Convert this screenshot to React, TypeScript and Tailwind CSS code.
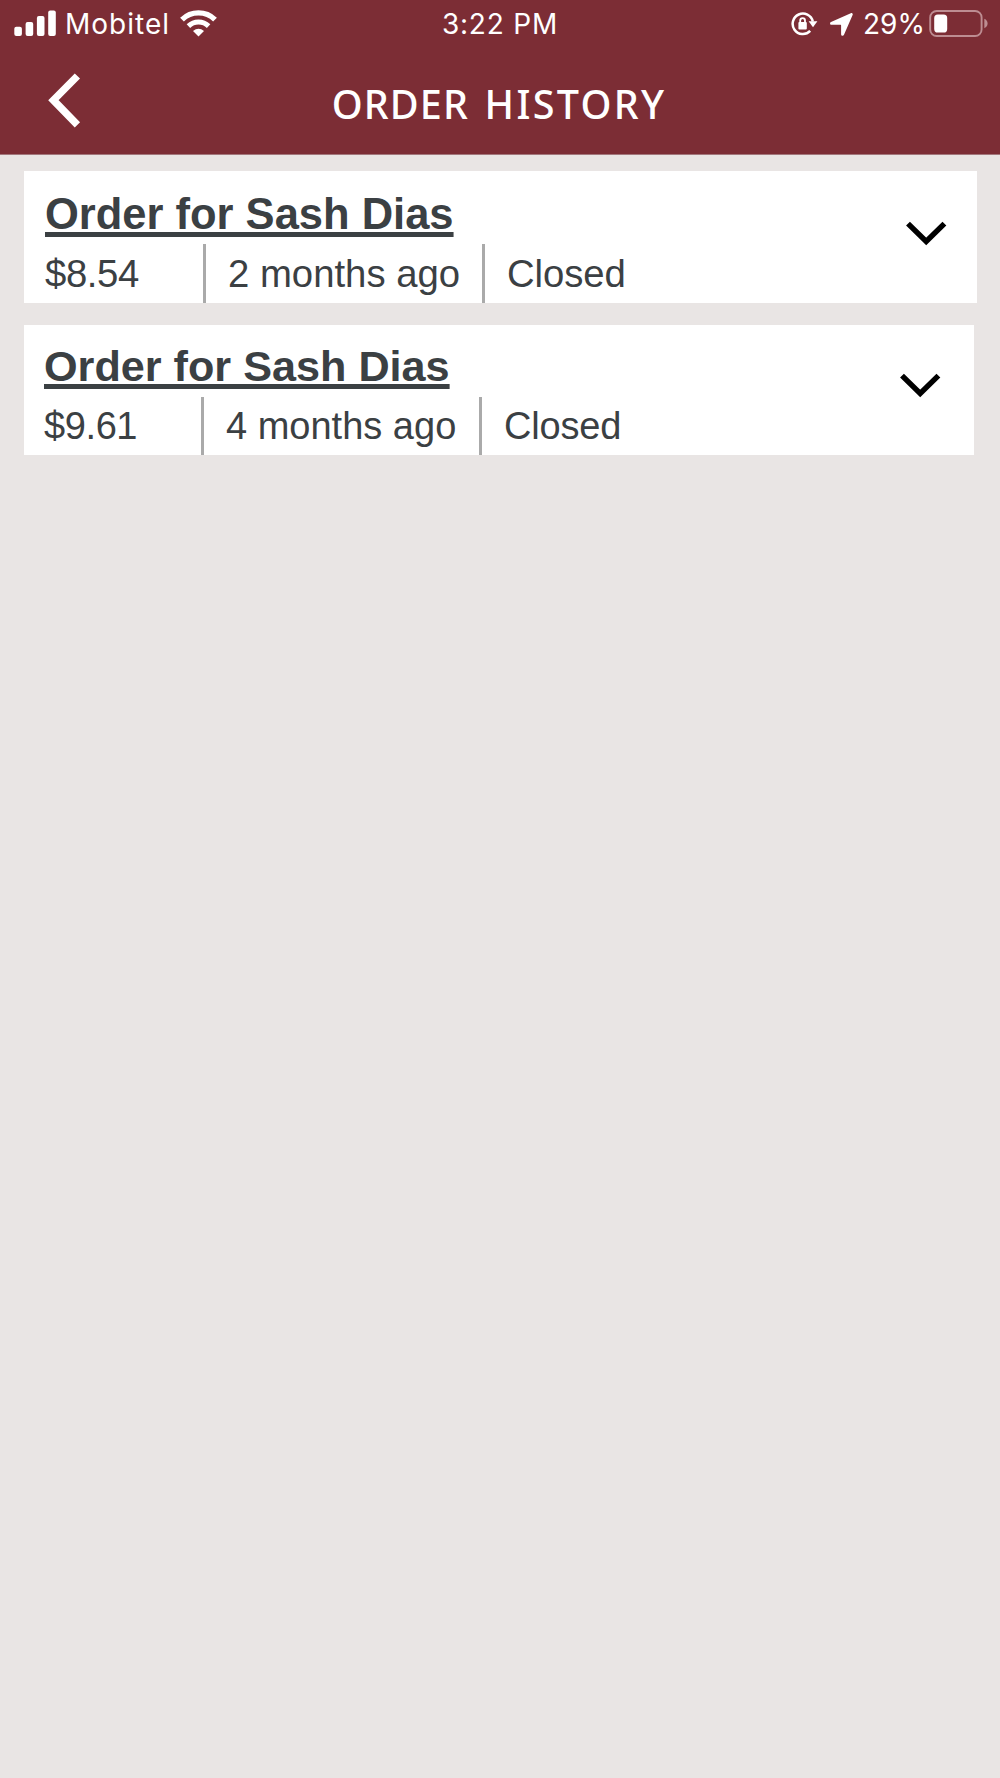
type Order = {
  id: number;
  name: string;
  total: string;
  placed: string;
  status: string;
};

const FIRST: Order = {
  id: 1,
  name: "Order for Sash Dias",
  total: "$8.54",
  placed: "2 months ago",
  status: "Closed",
};

const SECOND: Order = {
  id: 2,
  name: "Order for Sash Dias",
  total: "$9.61",
  placed: "4 months ago",
  status: "Closed",
};

function SignalIcon() {
  return (
    <svg width="42" height="26" viewBox="0 0 42 26" fill="white" aria-hidden>
      <rect x="0.3" y="16.8" width="7.6" height="9.2" rx="2" />
      <rect x="11.6" y="12" width="7.6" height="14" rx="2" />
      <rect x="22.9" y="6" width="7.6" height="20" rx="2" />
      <rect x="34.2" y="0.4" width="7.6" height="25.6" rx="2" />
    </svg>
  );
}

function WifiIcon() {
  return (
    <svg width="37" height="27" viewBox="0 0 37 27" fill="none" aria-hidden>
      <path d="M2 9.6a23.6 23.6 0 0 1 33 0" stroke="white" strokeWidth="5.4" />
      <path d="M8.4 16.1a14.6 14.6 0 0 1 20.2 0" stroke="white" strokeWidth="5" />
      <path d="M18.5 26.6 13 21q5.5-4.6 11 0z" fill="white" />
    </svg>
  );
}

function RotationLockIcon() {
  return (
    <svg width="27" height="24" viewBox="0 0 27 24" fill="none" aria-hidden>
      <path d="M19.2 18.9a10.2 10.2 0 1 1 2.6-9.4" stroke="white" strokeWidth="2.5" />
      <path d="M17.6 9.2h8.8l-4.4 6z" fill="white" />
      <rect x="7.4" y="10" width="8.4" height="7.4" rx="1" fill="white" />
      <path d="M9.2 11V8.6a2.4 2.4 0 0 1 4.8 0V11" stroke="white" strokeWidth="1.8" />
    </svg>
  );
}

function LocationIcon() {
  return (
    <svg width="23" height="23" viewBox="0 0 23 23" fill="white" aria-hidden>
      <path d="M20.8.2 1 9c-1.5.7-1.2 2.8.5 2.8h8.8c.6 0 .8.2.8.8v8.6c0 1.8 2.2 2.2 2.9.6L22.6 2.1C23.2.8 22-.4 20.8.2z" />
    </svg>
  );
}

function BatteryIcon() {
  return (
    <svg width="60" height="27" viewBox="0 0 60 27" fill="none" aria-hidden>
      <rect x="1.2" y="1" width="51.4" height="25" rx="6.5" stroke="#bd8d92" strokeWidth="1.9" />
      <rect x="5.2" y="4.5" width="13" height="18" rx="3.6" fill="white" />
      <path d="M55.3 8.8c4.4 1.7 4.4 7.7 0 9.4z" fill="#bd8d92" />
    </svg>
  );
}

function ChevronDown() {
  return (
    <svg width="42" height="26" viewBox="0 0 42 26" fill="none" aria-hidden>
      <path d="M3 2.6 21.2 20.4 39.4 2.6" stroke="black" strokeWidth="5.5" />
    </svg>
  );
}

function StatusBar() {
  return (
    <div className="grid h-[46px] grid-cols-[1fr_auto_1fr] text-[28px] leading-[46px] text-white">
      <div className="flex pl-[14px]">
        <span className="pt-[10px]">
          <SignalIcon />
        </span>
        <span className="ml-[9px] w-[115px] pt-px tracking-[1px]">Mobitel</span>
        <span className="pt-[10px]">
          <WifiIcon />
        </span>
      </div>
      <span className="pt-px tracking-[0.8px]">3:22 PM</span>
      <div className="flex justify-end pr-[11px]">
        <span className="pt-3">
          <RotationLockIcon />
        </span>
        <span className="ml-3 pt-[13px]">
          <LocationIcon />
        </span>
        <span className="ml-[10px] w-[66px] pt-px">29%</span>
        <span className="pt-[10px]">
          <BatteryIcon />
        </span>
      </div>
    </div>
  );
}

function Header() {
  return (
    <header className="h-[155px] border-b border-[#a3777c] bg-[#7c2d35] font-['Inter',sans-serif]">
      <StatusBar />
      <div className="grid grid-cols-[1fr_auto_1fr] pt-[26px]">
        <button aria-label="Back" className="flex h-[56px] pl-[48px]">
          <svg width="34" height="56" viewBox="0 0 34 56" fill="none" aria-hidden>
            <path d="M29.4 4 5.4 28.2l24 24.6" stroke="white" strokeWidth="7.4" />
          </svg>
        </button>
        <h1 className="-ml-[2px] pt-1 font-['Noto_Sans',sans-serif] text-[39.5px] leading-[56px] font-medium tracking-[2.3px] [word-spacing:3px] text-white">
          <span className="tracking-[1.1px]">ORDER</span> HISTORY
        </h1>
      </div>
    </header>
  );
}

export default function App() {
  return (
    <div className="h-[1778px] w-[1000px] overflow-hidden bg-[#e9e5e4]">
      <Header />
      <main className="pt-4 pl-6 font-['Liberation_Sans',Arial,sans-serif] text-[#3b4043]">
        <section className="flex h-[132px] w-[953px] justify-between bg-white pr-[30px] pl-[21px]">
          <div className="flex flex-col">
            <h2 className="h-[73px] pt-[19px] text-[43.5px] leading-[48px] font-bold whitespace-nowrap underline decoration-[5px] underline-offset-[3px] [text-decoration-skip-ink:none]">
              {FIRST.name}
            </h2>
            <div className="flex h-[59px] text-[38.3px] leading-[60px] whitespace-nowrap">
              <span className="w-[161px] border-r-[3px] border-[#aaa] tracking-[-0.4px]">{FIRST.total}</span>
              <span className="w-[279px] border-r-[3px] border-[#aaa] pl-[22px]">{FIRST.placed}</span>
              <span className="pl-[22px] tracking-[-0.1px]">{FIRST.status}</span>
            </div>
          </div>
          <button aria-label="Expand order" className="flex pt-[50px]">
            <ChevronDown />
          </button>
        </section>

        <section className="mt-[22px] flex h-[130px] w-[950px] justify-between bg-white pr-[33px] pl-5">
          <div className="flex flex-col">
            <h2 className="h-[72px] pt-[17px] text-[43.2px] leading-[48px] font-bold whitespace-nowrap underline decoration-[5px] underline-offset-[3px] [text-decoration-skip-ink:none]">
              {SECOND.name}
            </h2>
            <div className="flex h-[58px] text-[38px] leading-[59px] whitespace-nowrap">
              <span className="w-[160px] border-r-[3px] border-[#aaa] tracking-[-0.4px]">{SECOND.total}</span>
              <span className="w-[278px] border-r-[3px] border-[#aaa] pl-[22px]">{SECOND.placed}</span>
              <span className="pl-[22px] tracking-[-0.2px]">{SECOND.status}</span>
            </div>
          </div>
          <button aria-label="Expand order" className="flex pt-12">
            <ChevronDown />
          </button>
        </section>
      </main>
    </div>
  );
}
